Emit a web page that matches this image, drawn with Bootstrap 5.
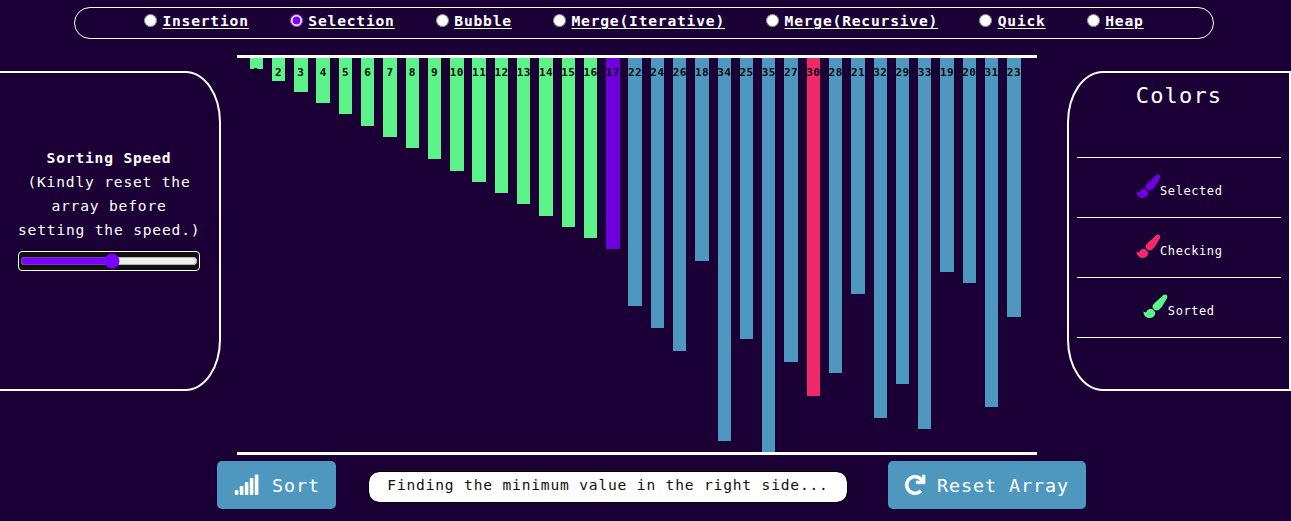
<!DOCTYPE html>
<html lang="en">
<head>
<meta charset="utf-8">
<meta name="viewport" content="width=device-width, initial-scale=1">
<title>Sorting Visualizer</title>
<link href="https://cdn.jsdelivr.net/npm/bootstrap@5.3.0/dist/css/bootstrap.min.css" rel="stylesheet">
<style>
body{background:#1a0035;color:#fff;font-family:"DejaVu Sans Mono","Liberation Mono",monospace;font-size:14.6px;letter-spacing:.81px;line-height:24px;height:521px;overflow:hidden}
.algos{width:1140px;height:32px;margin:7px 0 0 74px;border:1px solid #fff;border-radius:16px;padding-left:69px;padding-bottom:6px}
.algos label{font-weight:700;text-decoration:underline;text-decoration-thickness:1px;text-underline-offset:2px;margin:0 41.2px 0 5.4px;padding-top:1px;line-height:24px}
input{accent-color:#7a00ff;margin:0}
.algos input{width:13px;height:13px}
.stage{margin-top:16px;height:400px}
.side{height:320px;margin-top:16px;border:2px solid #fff}
.speed{width:221px;border-left:0;border-radius:0 16% 16% 0;padding:73px 19px 0 18px}
.speed p{white-space:nowrap}
.slider{width:182px;height:20px;border:1px solid #fff;border-radius:4px;background:#101010;padding:2px 1px;margin-top:9px}
.slider input{width:178px;height:14px;background:#1a0035;display:block}
.legend{width:224px;margin-left:30px;border-radius:16% 0 0 16%;padding:0 8px}
.legend h2{font-size:22px;letter-spacing:1.15px;line-height:28px;height:84px;padding-top:9px;margin:0;font-weight:400}
.legend .key{height:60px;border-top:1px solid #fff;font-size:12px;letter-spacing:.58px}
.key svg{width:24.5px;height:24.4px;margin-top:-3px}
.key span{padding-top:6px}
.chart{width:800px;height:400px;margin-left:16px;border:solid #fff;border-width:3px 0;padding-left:12.640625px;gap:8.921875px}
.bar{width:13.359375px;flex:none;background:#4e98bf;color:#0b0b0b;font-size:11px;letter-spacing:.4px;font-weight:700;line-height:29px}
.bar.done{background:#5cf38a}.bar.sel{background:#6e00e0}.bar.chk{background:#ee2a6b}
.controls{height:48px;margin:6px 0 0 217px}
.action{background:#4e98bf!important;color:#fff!important;border:0;border-radius:5px;height:48px;font-size:18.4px;letter-spacing:.92px;padding:0 0 0 17px}
.action span{padding-top:1px}
.msg{width:478px;height:30px;border-radius:10px;background:#fff;color:#101010;outline:1px solid #000;margin:3px 41px 0 33px;line-height:26px}
</style>
</head>
<body>
<nav class="algos d-flex align-items-center" id="algos"></nav>
<main class="stage d-flex align-items-start">
  <section class="side speed text-center">
    <p class="m-0"><b>Sorting Speed</b><br>(Kindly reset the<br>array before<br>setting the speed.)</p>
    <div class="slider"><input type="range" min="0" max="100" value="52" aria-label="Speed"></div>
  </section>
  <section class="chart d-flex align-items-start" id="chart"></section>
  <aside class="side legend text-center">
    <h2>Colors</h2>
    <div class="key d-flex align-items-center justify-content-center"><svg viewBox="0 0 75 73" fill="#6e00e0"><use href="#brush"/></svg><span>Selected</span></div>
    <div class="key d-flex align-items-center justify-content-center"><svg viewBox="0 0 75 73" fill="#ee2a6b"><use href="#brush"/></svg><span>Checking</span></div>
    <div class="key d-flex align-items-center justify-content-center"><svg viewBox="0 0 75 73" fill="#5cf38a"><use href="#brush"/></svg><span>Sorted</span></div>
    <div class="key"></div>
  </aside>
</main>
<footer class="controls d-flex align-items-center">
  <button class="btn action d-flex align-items-center" style="width:119px"><svg class="me-2" width="26" height="22" viewBox="0 0 26 22" fill="#fff"><rect x=".8" y="16" width="3.6" height="5" rx=".9"/><rect x="5.8" y="12" width="3.6" height="9" rx=".9"/><rect x="10.8" y="8" width="3.6" height="13" rx=".9"/><rect x="15.8" y="4" width="3.6" height="17" rx=".9"/><rect x="20.8" y=".5" width="3.6" height="20.5" rx=".9"/></svg><span class="ps-1">Sort</span></button>
  <div class="msg text-center">Finding the minimum value in the right side...</div>
  <button class="btn action d-flex align-items-center" style="width:198px"><svg class="me-2 overflow-visible" width="20" height="20" viewBox="0 0 512 512" fill="#fff" stroke="#fff" stroke-width="18"><path d="M500.33 0h-47.41a12 12 0 0 0-12 12.57l4 82.76A247.42 247.42 0 0 0 256 8C119.34 8 7.9 119.53 8 256.19 8.1 393.07 119.1 504 256 504a247.1 247.1 0 0 0 166.18-63.91 12 12 0 0 0 .48-17.43l-34-34a12 12 0 0 0-16.38-.55A176 176 0 1 1 402.1 157.8l-101.53-4.87a12 12 0 0 0-12.57 12v47.41a12 12 0 0 0 12 12h200.33a12 12 0 0 0 12-12V12a12 12 0 0 0-12-12z"/></svg><span class="ps-1">Reset Array</span></button>
</footer>
<svg class="d-none"><path id="brush" d="M64 1Q70-1 74 4 75 8 73 13L58 38Q50 49 41 50 34 48 30 42 27 35 34 28ZM1 52Q5 57 10 54 12 46 21 44 25 44 28 45L37 54Q39 63 32 69 25 74 14 72 2 68 1 52Z"/></svg>
<script src="https://cdn.jsdelivr.net/npm/bootstrap@5.3.0/dist/js/bootstrap.bundle.min.js"></script>
<script>
const names = ['Insertion','Selection','Bubble','Merge(Iterative)','Merge(Recursive)','Quick','Heap'];
document.getElementById('algos').innerHTML = names.map((n,i) =>
  `<input type="radio" name="algo" id="a${i}"${i===1?' checked':''}><label for="a${i}">${n}</label>`).join('');
const values = [1,2,3,4,5,6,7,8,9,10,11,12,13,14,15,16,17,22,24,26,18,34,25,35,27,30,28,21,32,29,33,19,20,31,23];
document.getElementById('chart').innerHTML = values.map(v => {
  const state = v < 17 ? 'done' : v === 17 ? 'sel' : v === 30 ? 'chk' : '';
  return `<div class="bar ${state} d-flex justify-content-center" style="height:${(v*394/35).toFixed(2)}px">${v}</div>`;
}).join('');
</script>
</body>
</html>
